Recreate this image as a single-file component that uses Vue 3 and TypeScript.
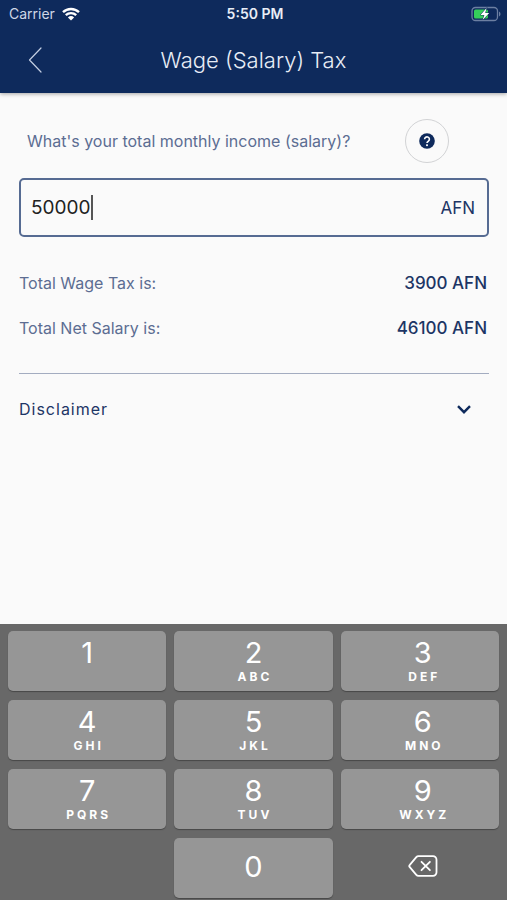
<script setup lang="ts">
import { computed, ref } from 'vue'

interface Key {
  digit: string
  letters: string
}

const keys: Key[] = [
  { digit: '1', letters: '' },
  { digit: '2', letters: 'ABC' },
  { digit: '3', letters: 'DEF' },
  { digit: '4', letters: 'GHI' },
  { digit: '5', letters: 'JKL' },
  { digit: '6', letters: 'MNO' },
  { digit: '7', letters: 'PQRS' },
  { digit: '8', letters: 'TUV' },
  { digit: '9', letters: 'WXYZ' },
]

const income = ref('50000')

// Progressive monthly brackets: 0%, 2%, 10% and 20%.
const tax = computed<number>(() => {
  const salary = Number(income.value) || 0
  if (salary <= 5000) return 0
  if (salary <= 12500) return Math.round((salary - 5000) * 0.02)
  if (salary <= 100000) return Math.round(150 + (salary - 12500) * 0.1)
  return Math.round(8900 + (salary - 100000) * 0.2)
})
const net = computed<number>(() => (Number(income.value) || 0) - tax.value)
const inputWidth = computed<string>(() => `${Math.max(income.value.length, 1)}ch`)

function press(digit: string): void {
  if (income.value.length < 12) income.value += digit
}

function erase(): void {
  income.value = income.value.slice(0, -1)
}
</script>

<template>
  <div class="screen">
    <header class="header">
      <div class="status">
        <div class="carrier">
          <span>Carrier</span>
          <svg class="wifi" viewBox="0 0 18 14" aria-hidden="true">
            <path d="M1 5.2a11.6 11.6 0 0 1 16 0" />
            <path d="M3.8 8.2a7.6 7.6 0 0 1 10.4 0" />
            <path class="solid" d="M9 13.6 5.9 10.5a4.5 4.5 0 0 1 6.2 0z" />
          </svg>
        </div>
        <span class="time">5:50 PM</span>
        <svg class="battery" viewBox="0 0 30 16" aria-hidden="true">
          <rect class="shell" x="1" y="1.5" width="25.5" height="13" rx="3.5" />
          <path class="cap" d="M28 5.5a2.8 2.8 0 0 1 0 5z" />
          <rect class="charge" x="3" y="3.5" width="14" height="9" rx="1.5" />
          <path class="bolt" d="M15.6 2 9.4 8.9h4L11.6 14l6.6-7h-4z" />
        </svg>
      </div>
      <div class="bar">
        <button class="back" type="button" aria-label="Back">
          <svg viewBox="0 0 14 26" aria-hidden="true"><path d="M13 1 1.5 13 13 25" /></svg>
        </button>
        <h1>Wage (Salary) Tax</h1>
      </div>
    </header>

    <main class="content">
      <div class="question">
        <label for="income">What's your total monthly income (salary)?</label>
        <button class="help" type="button" aria-label="Help">
          <svg viewBox="0 0 16 16" aria-hidden="true">
            <circle cx="8" cy="8" r="7.8" />
            <path d="M5.6 6.3a2.4 2.4 0 1 1 3.8 1.9C8.5 8.8 8 9.1 8 10" />
            <rect x="7.1" y="11.3" width="1.8" height="1.8" />
          </svg>
        </button>
      </div>

      <label class="field" for="income">
        <input id="income" v-model="income" type="text" inputmode="numeric" :style="{ width: inputWidth }" />
        <span class="caret"></span>
        <span class="unit">AFN</span>
      </label>

      <dl class="results">
        <div class="row">
          <dt>Total Wage Tax is:</dt>
          <dd>{{ tax }} AFN</dd>
        </div>
        <div class="row">
          <dt>Total Net Salary is:</dt>
          <dd>{{ net }} AFN</dd>
        </div>
      </dl>

      <button class="disclaimer" type="button" aria-expanded="false">
        <span>Disclaimer</span>
        <svg viewBox="0 0 14 9" aria-hidden="true"><path d="M1 1.2 7 7.2 13 1.2" /></svg>
      </button>
    </main>

    <section class="keypad" aria-label="Number pad">
      <button v-for="key in keys" :key="key.digit" class="key" type="button" @click="press(key.digit)">
        <span class="digit">{{ key.digit }}</span>
        <span class="letters">{{ key.letters }}</span>
      </button>
      <button class="key zero" type="button" @click="press('0')">
        <span class="digit">0</span>
      </button>
      <button class="erase" type="button" aria-label="Delete" @click="erase">
        <svg viewBox="0 0 30 22" aria-hidden="true">
          <path d="M10.5 1.2H25a3.5 3.5 0 0 1 3.5 3.5v12.600a3.5 3.5 0 0 1-3.5 3.5H10.5a3 3 0 0 1-2.2-1L1.8 12.2a1.8 1.8 0 0 1 0-2.4L8.3 2.2a3 3 0 0 1 2.2-1z" />
          <path d="m13.5 6.8 8.4 8.4M21.9 6.8l-8.4 8.4" />
        </svg>
      </button>
    </section>
  </div>
</template>

<style>
body {
  margin: 0;
  background: #fafafa;
}
</style>

<style scoped>
.screen {
  display: flex;
  flex-direction: column;
  min-height: 100vh;
  font-family: Inter, "Liberation Sans", sans-serif;
  color: #1d3565;
  background: #fafafa;
}

button {
  padding: 0;
  border: 0;
  background: none;
  color: inherit;
  font: inherit;
  cursor: pointer;
}

svg {
  display: block;
  fill: none;
  stroke-linecap: round;
  stroke-linejoin: round;
}

.header {
  background: #0e2a5c;
  color: #e8edf6;
  box-shadow: 0 1px 4px rgba(0, 0, 0, 0.35);
}

.status {
  display: grid;
  grid-template-columns: 1fr auto 1fr;
  align-items: center;
  height: 27px;
  padding: 0 6px 0 9px;
  font-size: 14px;
}

.carrier {
  display: flex;
  align-items: center;
  gap: 7px;
  color: #cfd7e6;
}

.wifi {
  width: 18px;
  height: 14px;
  stroke: #ffffff;
  stroke-width: 2.4;
  stroke-linecap: butt;
}

.wifi .solid {
  fill: #ffffff;
  stroke: none;
}

.time {
  font-weight: 600;
}

.battery {
  justify-self: end;
  width: 30px;
  height: 16px;
}

.shell {
  stroke: #6c7fa2;
  stroke-width: 1.3;
}

.cap {
  fill: #6c7fa2;
}

.charge {
  fill: #35d05a;
}

.bolt {
  fill: #ffffff;
  stroke: #0e2a5c;
  stroke-width: 1;
  paint-order: stroke;
}

.bar {
  display: grid;
  grid-template-columns: 70px 1fr 70px;
  align-items: center;
  height: 66px;
}

.back {
  display: flex;
  align-items: center;
  justify-content: center;
  height: 44px;
}

.back svg {
  width: 14px;
  height: 26px;
  stroke: #c3cee2;
  stroke-width: 1.2;
}

h1 {
  margin: 0;
  font-size: 22px;
  font-weight: 300;
  line-height: 28px;
  text-align: center;
}

.content {
  flex: 1;
  padding: 26px 18px 0 19px;
}

.question {
  display: flex;
  align-items: center;
  justify-content: space-between;
  padding: 0 40px 0 8px;
  color: #5c6d92;
  font-size: 16px;
}

.question label {
  white-space: nowrap;
}

.help {
  display: flex;
  flex: none;
  align-items: center;
  justify-content: center;
  box-sizing: border-box;
  width: 44px;
  height: 44px;
  border: 1px solid #d2d3d5;
  border-radius: 50%;
}

.help svg {
  width: 16px;
  height: 16px;
}

.help circle {
  fill: #0e2a5c;
}

.help path {
  stroke: #ffffff;
  stroke-width: 1.6;
  stroke-linecap: butt;
}

.help rect {
  fill: #ffffff;
}

.field {
  display: flex;
  align-items: center;
  box-sizing: border-box;
  height: 59px;
  margin-top: 15px;
  padding: 0 12px 0 10px;
  border: 2px solid #566b92;
  border-radius: 5px;
}

.field input {
  max-width: 80%;
  padding: 0;
  border: 0;
  outline: 0;
  background: none;
  color: #222222;
  caret-color: transparent;
  font-family: inherit;
  font-size: 19px;
  line-height: 24px;
}

.caret {
  width: 2px;
  height: 25px;
  background: #555555;
}

.unit {
  margin-left: auto;
  font-size: 17px;
}

.results {
  margin: 0;
  padding: 23px 2px 23px 0;
  border-bottom: 1px solid #a3acc0;
}

.row {
  display: flex;
  align-items: center;
  justify-content: space-between;
  height: 45px;
}

.results dt {
  color: #5c6d92;
  font-size: 16px;
}

.results dd {
  margin: 0;
  font-size: 17px;
  font-weight: 500;
}

.disclaimer {
  display: flex;
  align-items: center;
  justify-content: space-between;
  width: 100%;
  height: 70px;
  padding: 0 18px 0 0;
  font-size: 16px;
  letter-spacing: 1px;
}

.disclaimer svg {
  width: 14px;
  height: 9px;
  stroke: #0e2a5c;
  stroke-width: 2.4;
  stroke-linecap: butt;
  stroke-linejoin: miter;
}

.keypad {
  display: grid;
  grid-template-columns: repeat(3, 1fr);
  grid-auto-rows: 60px;
  gap: 9px 8px;
  padding: 7px 8px 2px;
  background: #686868;
}

.key {
  display: flex;
  flex-direction: column;
  align-items: center;
  padding-top: 5px;
  border-radius: 5px;
  background: #969696;
  box-shadow: 0 1px 1px #484848;
  color: #ffffff;
}

.key:nth-child(3n) {
  padding-left: 6px;
}

.zero {
  grid-column: 2;
  justify-content: center;
  padding: 0 0 4px;
}

.digit {
  font-size: 29px;
  line-height: 33px;
}

.letters {
  padding-left: 3px;
  font-size: 12px;
  font-weight: 700;
  letter-spacing: 3px;
  line-height: 16px;
}

.erase {
  display: flex;
  align-items: center;
  justify-content: center;
  padding: 0 0 5px 6px;
}

.erase svg {
  width: 30px;
  height: 22px;
  stroke: #ffffff;
  stroke-width: 1.8;
}
</style>
